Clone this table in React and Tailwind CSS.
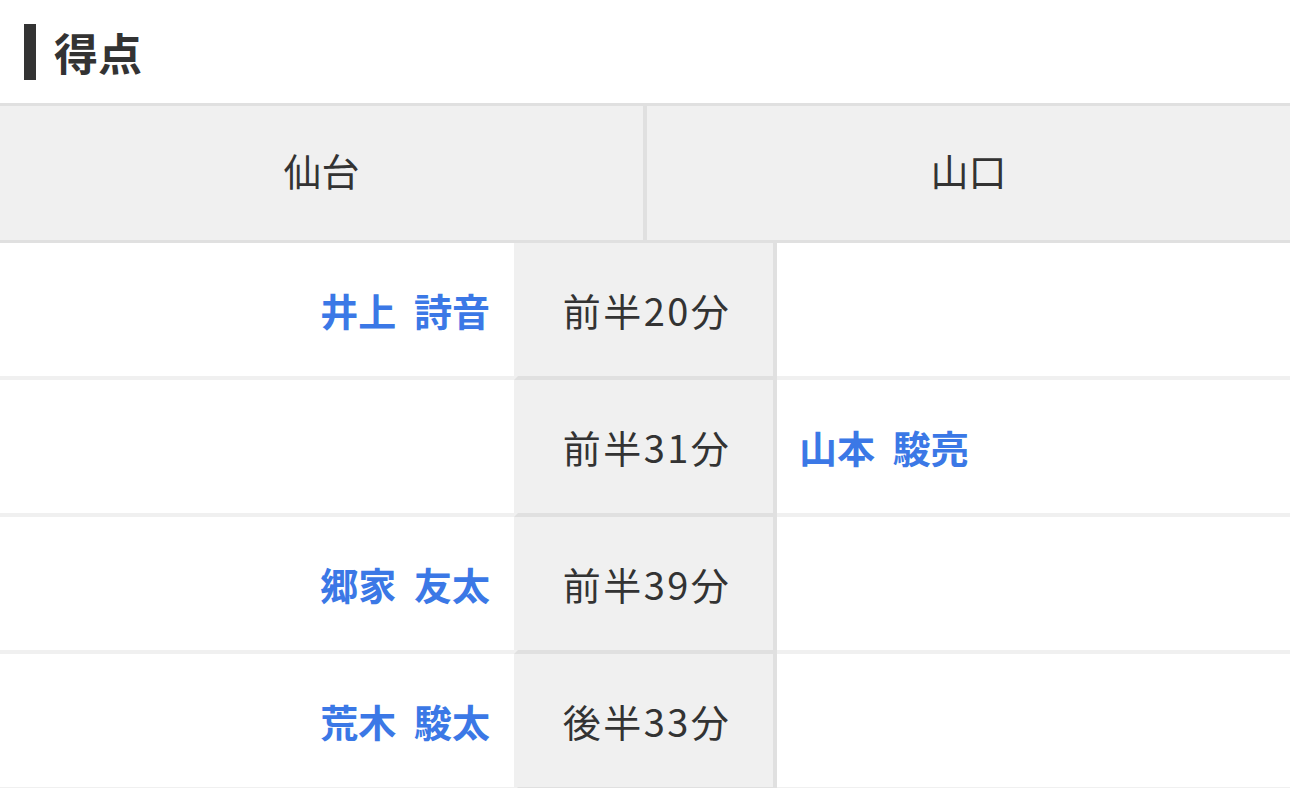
import React from 'react';

const goals = [
  { home: '井上 詩音', time: '前半20分', away: '' },
  { home: '', time: '前半31分', away: '山本 駿亮' },
  { home: '郷家 友太', time: '前半39分', away: '' },
  { home: '荒木 駿太', time: '後半33分', away: '' },
];

const ScoreRow = ({ goal }) => (
  <div className="flex h-[137px]">
    <div className="flex w-[514px] items-center justify-end border-b-4 border-[#f0f0f0] pr-6 text-[38px] font-bold text-[#3b78e6] [word-spacing:9px]">
      {goal.home}
    </div>
    <div className="flex w-[263px] items-center justify-center border-b-4 border-l-4 border-r-4 border-[#e0e0e0] border-l-[#f0f0f0] bg-[#f0f0f0] pl-[3px] text-[38px] tracking-[2.5px] text-[#333]">
      {goal.time}
    </div>
    <div className="flex flex-1 items-center border-b-4 border-[#f0f0f0] pl-[22px] text-[38px] font-bold text-[#3b78e6] [word-spacing:9px]">
      {goal.away}
    </div>
  </div>
);

export default function App() {
  return (
    <div
      className="h-[788px] w-[1290px] overflow-hidden bg-white"
      style={{ fontFamily: '"Noto Sans CJK JP", "Noto Sans", sans-serif' }}
    >
      <div className="flex h-[103px] items-center pl-6">
        <span className="h-[56px] w-3 bg-[#333]" />
        <h2 className="ml-[18px] text-[44px] font-bold leading-none text-[#333]">得点</h2>
      </div>

      <div className="flex h-[140px] border-b-[3px] border-t-[3px] border-[#e0e0e0] bg-[#f0f0f0] text-[38px] text-[#333]">
        <div className="flex w-[647px] items-center justify-center border-r-4 border-[#e0e0e0] pb-2">仙台</div>
        <div className="flex flex-1 items-center justify-center pb-2">山口</div>
      </div>

      {goals.map((goal) => (
        <ScoreRow key={goal.time} goal={goal} />
      ))}
    </div>
  );
}
